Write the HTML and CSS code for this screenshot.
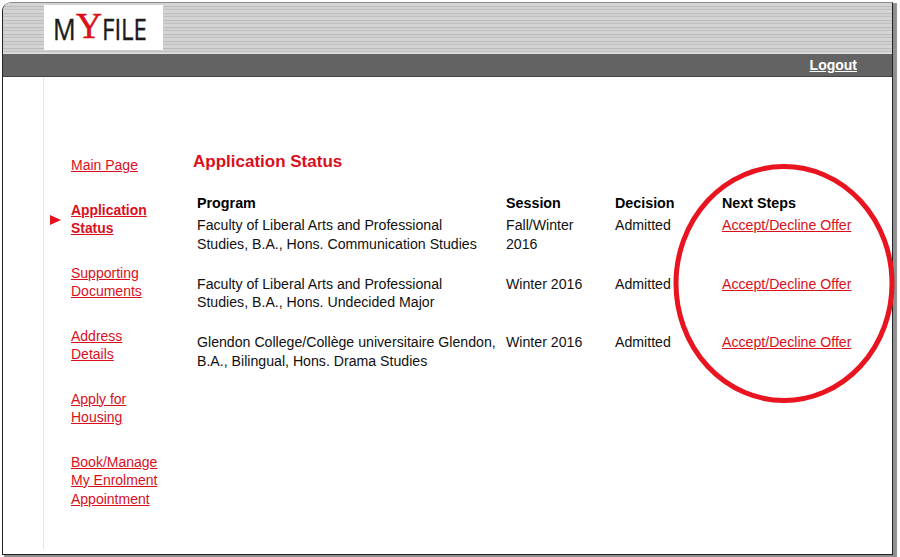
FILE: index.html
```html
<!DOCTYPE html>
<html lang="en">
<head>
<meta charset="utf-8">
<title>MyFile - Application Status</title>
<link rel="stylesheet" href="styles.css">
</head>
<body>
<div class="window">
  <header class="header">
    <div class="logo"><span class="logo-m">M</span><span class="logo-y">Y</span><span class="logo-file">FILE</span></div>
  </header>
  <div class="bar"><a class="logout" href="#">Logout</a></div>
  <div class="content">
    <nav class="nav">
      <a class="nav-link" href="#">Main Page</a>
      <a class="nav-link active" href="#">Application<br>Status</a>
      <a class="nav-link" href="#">Supporting<br>Documents</a>
      <a class="nav-link" href="#">Address<br>Details</a>
      <a class="nav-link" href="#">Apply for<br>Housing</a>
      <a class="nav-link" href="#">Book/Manage<br>My Enrolment<br>Appointment</a>
    </nav>
    <main class="main">
      <h1 class="title">Application Status</h1>
      <div class="grid">
        <div class="th">Program</div><div class="th">Session</div><div class="th">Decision</div><div class="th">Next Steps</div>
        <div class="td">Faculty of Liberal Arts and Professional<br>Studies, B.A., Hons. Communication Studies</div><div class="td">Fall/Winter<br>2016</div><div class="td">Admitted</div><div class="td"><a href="#">Accept/Decline Offer</a></div>
        <div class="td">Faculty of Liberal Arts and Professional<br>Studies, B.A., Hons. Undecided Major</div><div class="td">Winter 2016</div><div class="td">Admitted</div><div class="td"><a href="#">Accept/Decline Offer</a></div>
        <div class="td">Glendon College/Collège universitaire Glendon,<br>B.A., Bilingual, Hons. Drama Studies</div><div class="td">Winter 2016</div><div class="td">Admitted</div><div class="td"><a href="#">Accept/Decline Offer</a></div>
      </div>
    </main>
  </div>
</div>
<svg class="circle" width="900" height="557" viewBox="0 0 900 557" aria-hidden="true"><ellipse cx="784" cy="283.500" rx="108" ry="117" fill="none" stroke="#e8141f" stroke-width="5"/></svg>
</body>
</html>
```
FILE: styles.css
```css
html, body { margin: 0; padding: 0; background: #fff; }
body { width: 900px; height: 557px; overflow: hidden; position: relative; font-family: "Liberation Sans", Arial, sans-serif; color: #111; }
a { color: #d9101c; }
.window {
  box-sizing: border-box;
  width: 891px; height: 553px; margin: 2px 0 0 2px;
  border-radius: 9px 0 0 0;
  border: 1px solid #222; border-top-color: #8a8a8a;
  box-shadow: 3px 2px 1px 1px #8f8f8f;
  display: flex; flex-direction: column; overflow: hidden; background: #fff;
}
.header {
  height: 50px; flex: none; padding-left: 41px;
  background: repeating-linear-gradient(to bottom, #d4d4d4 0 3px, #bcbcbc 3px 4px, #d0d0d0 4px 6px, #c2c2c2 6px 7px);
  border-bottom: 1px solid #e0e0e0;
}
.logo {
  box-sizing: border-box; width: 119px; height: 45px; margin-top: 2px; background: #fff;
  display: flex; align-items: center; padding: 3px 0 0 9px; color: #1c1c1c;
  font-family: "Open Sans", sans-serif; font-size: 30px; line-height: 1;
  -webkit-text-stroke: .4px #1c1c1c;
}
.logo-m, .logo-file { display: inline-block; transform-origin: left center; }
.logo-m { width: 23px; transform: scaleX(.84); }
.logo-y { font-family: "Liberation Serif", serif; font-size: 36px; color: #d9101c; margin: -6px 0 0; -webkit-text-stroke: .5px #d9101c; }
.logo-file { transform: scaleX(.8); }
.bar {
  height: 22px; flex: none; background: #636363; display: flex; justify-content: flex-end; align-items: center;
  padding-right: 35px; border-bottom: 1px solid #444;
}
.logout { color: #fff; font-weight: bold; font-size: 14px; }
.content { flex: 1; display: flex; padding-bottom: 5px; }
.nav {
  box-sizing: border-box; width: 148px; flex: none; margin-left: 40px; padding: 79px 0 0 27px;
  border-left: 1px solid #e6e6e6; display: flex; flex-direction: column; gap: 26px;
  font-size: 14px; line-height: 18.500px;
}
.nav-link { position: relative; display: block; }
.active { font-weight: bold; font-size: 13.900px; }
.active::before {
  content: ""; position: absolute; left: -21px; top: 14px;
  border-left: 11px solid #e4101c; border-top: 5px solid transparent; border-bottom: 5px solid transparent;
}
.main { flex: 1; padding: 74px 0 0 1px; }
.title { margin: 0 0 22px 1px; font-size: 17px; line-height: 21px; font-weight: bold; color: #d9101c; }
.grid {
  display: grid; grid-template-columns: 309px 109px 107px 1fr; margin-left: 5px;
  font-size: 14.150px; line-height: 18.250px;
}
.th { font-size: 14.300px; font-weight: bold; color: #000; }
.td { padding: 4px 0 18px; }
.circle { position: absolute; left: 0; top: 0; pointer-events: none; }
```
